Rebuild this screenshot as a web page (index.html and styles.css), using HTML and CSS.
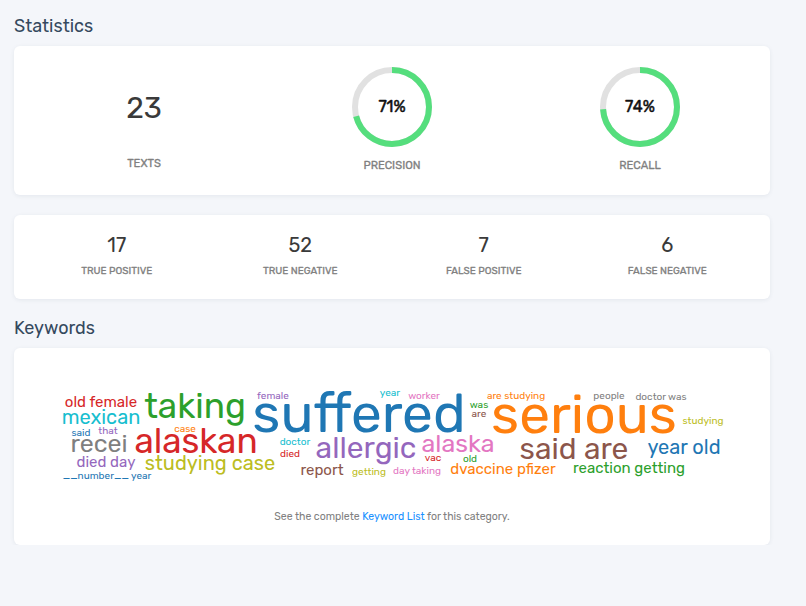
FILE: index.html
```html
<!DOCTYPE html>
<html lang="en">
<head>
<meta charset="utf-8">
<title>Statistics</title>
<link rel="stylesheet" href="styles.css">
</head>
<body>
<main>
  <h2>Statistics</h2>
  <section class="card summary">
    <div class="stat"><div class="total">23</div><div class="label texts">Texts</div></div>
    <div class="stat">
      <div class="ring"><svg viewBox="0 0 80 80"><circle class="track" cx="40" cy="40" r="37"/><circle class="value" cx="40" cy="40" r="37" pathLength="100" stroke-dasharray="71 100"/></svg><span>71%</span></div>
      <div class="label precision">Precision</div>
    </div>
    <div class="stat">
      <div class="ring"><svg viewBox="0 0 80 80"><circle class="track" cx="40" cy="40" r="37"/><circle class="value" cx="40" cy="40" r="37" pathLength="100" stroke-dasharray="74 100"/></svg><span>74%</span></div>
      <div class="label recall">Recall</div>
    </div>
  </section>
  <section class="card matrix">
    <div class="cell"><div class="count">17</div><div class="label">True Positive</div></div>
    <div class="cell"><div class="count">52</div><div class="label">True Negative</div></div>
    <div class="cell"><div class="count">7</div><div class="label">False Positive</div></div>
    <div class="cell"><div class="count">6</div><div class="label">False Negative</div></div>
  </section>
  <h2 class="keywords-title">Keywords</h2>
  <section class="card keywords">
    <svg class="cloud" viewBox="14 368 756 130">
      <g class="s15">
        <text class="red" x="101" y="407">old female</text>
        <text class="purple" x="106" y="467">died day</text>
        <text class="brown" x="322" y="475">report</text>
        <text class="orange" x="503" y="474">dvaccine pfizer</text>
        <text class="green" x="629" y="473">reaction getting</text>
      </g>
      <g class="s20">
        <text class="cyan" x="101" y="424">mexican</text>
        <text class="olive" x="210" y="470">studying case</text>
        <text class="blue" x="684" y="454">year old</text>
      </g>
      <g class="s25">
        <text class="gray" x="99" y="452">recei</text>
        <text class="pink" x="458" y="452">alaska</text>
      </g>
      <g class="s30">
        <text class="purple" x="366" y="458">allergic</text>
        <text class="brown" x="574" y="459">said are</text>
      </g>
      <g class="s35">
        <text class="green" x="195" y="418">taking</text>
        <text class="red" x="196" y="453">alaskan</text>
      </g>
      <g class="s55">
        <text class="blue" x="359" y="432">suffered</text>
        <text class="orange" x="584" y="433">serious</text>
      </g>
      <g class="s10">
        <text class="blue" x="81" y="436">said</text>
        <text class="purple" x="108" y="434">that</text>
        <text class="orange" x="185" y="432">case</text>
        <text class="blue" x="107" y="479">__number__ year</text>
        <text class="purple" x="273" y="399">female</text>
        <text class="cyan" x="390" y="396">year</text>
        <text class="pink" x="424" y="399">worker</text>
        <text class="green" x="479" y="408">was</text>
        <text class="brown" x="479" y="417">are</text>
        <text class="cyan" x="295" y="445">doctor</text>
        <text class="red" x="290" y="457">died</text>
        <text class="red" x="433" y="461">vac</text>
        <text class="green" x="470" y="462">old</text>
        <text class="olive" x="369" y="475">getting</text>
        <text class="pink" x="417" y="474">day taking</text>
        <text class="orange" x="516" y="399">are studying</text>
        <text class="gray" x="609" y="399">people</text>
        <text class="gray" x="661" y="400">doctor was</text>
        <text class="olive" x="703" y="424">studying</text>
      </g>
    </svg>
    <p>See the complete <a href="#">Keyword List</a> for this category.</p>
  </section>
</main>
</body>
</html>
```
FILE: styles.css
```css
body {
  margin: 0;
  background: #f4f6fa;
  font-family: Rubik, Roboto, sans-serif;
  color: #3a3a3a;
}
main { width: 756px; padding: 14px 0 0 14px; }
h2 {
  margin: 0 0 8px;
  font-size: 18px;
  line-height: 24px;
  font-weight: 370;
  color: #34495e;
}
.card {
  box-sizing: border-box;
  background: #fff;
  border-radius: 6px;
  box-shadow: 0 1px 4px rgba(40, 60, 90, .08);
}
.summary { display: flex; height: 149px; padding: 21px 6px 0; }
.stat { width: 248px; text-align: center; }
.total { height: 82px; line-height: 82px; font-size: 30px; font-weight: 370; }
.label {
  line-height: 16px;
  font-weight: 400;
  -webkit-text-stroke: .3px #808080;
  text-transform: uppercase;
  color: #808080;
}
.summary .label { margin-top: 11px; font-size: 11.2px; }
.summary .texts { margin-top: 7px; }
.ring { position: relative; width: 80px; height: 80px; margin: 0 auto; }
.ring svg { display: block; width: 80px; height: 80px; }
.ring circle { fill: none; stroke-width: 6; }
.track { stroke: #e1e1e1; }
.value { stroke: #55de7d; transform: rotate(-90deg); transform-origin: 40px 40px; }
.ring span {
  position: absolute;
  inset: 0;
  line-height: 80px;
  font-size: 16px;
  font-weight: 400;
  -webkit-text-stroke: .5px #111;
  color: #111;
}
.matrix {
  display: flex;
  height: 84px;
  margin-top: 20px;
  padding: 17px 11px 0;
}
.cell { flex: 1; text-align: center; }
.count { font-size: 20px; line-height: 26px; font-weight: 370; }
.matrix .label { margin-top: 5px; font-size: 10px; }
.keywords-title { margin-top: 17px; }
.keywords { height: 197px; padding-top: 20px; }
.cloud { display: block; width: 756px; height: 130px; text-anchor: middle; }
.keywords p {
  margin: 11px 0 0;
  font-size: 10.5px;
  line-height: 16px;
  text-align: center;
  color: #808080;
}
.keywords a { color: #1890ff; text-decoration: none; }
.s10 { font-size: 10px; }
.s15 { font-size: 15px; }
.s20 { font-size: 20px; }
.s25 { font-size: 25px; }
.s30 { font-size: 30px; }
.s35 { font-size: 35px; }
.s55 { font-size: 55px; }
.blue { fill: #1f77b4; }
.orange { fill: #ff7f0e; }
.green { fill: #2ca02c; }
.red { fill: #d62728; }
.purple { fill: #9467bd; }
.brown { fill: #8c564b; }
.pink { fill: #e377c2; }
.gray { fill: #7f7f7f; }
.olive { fill: #bcbd22; }
.cyan { fill: #17becf; }
```
